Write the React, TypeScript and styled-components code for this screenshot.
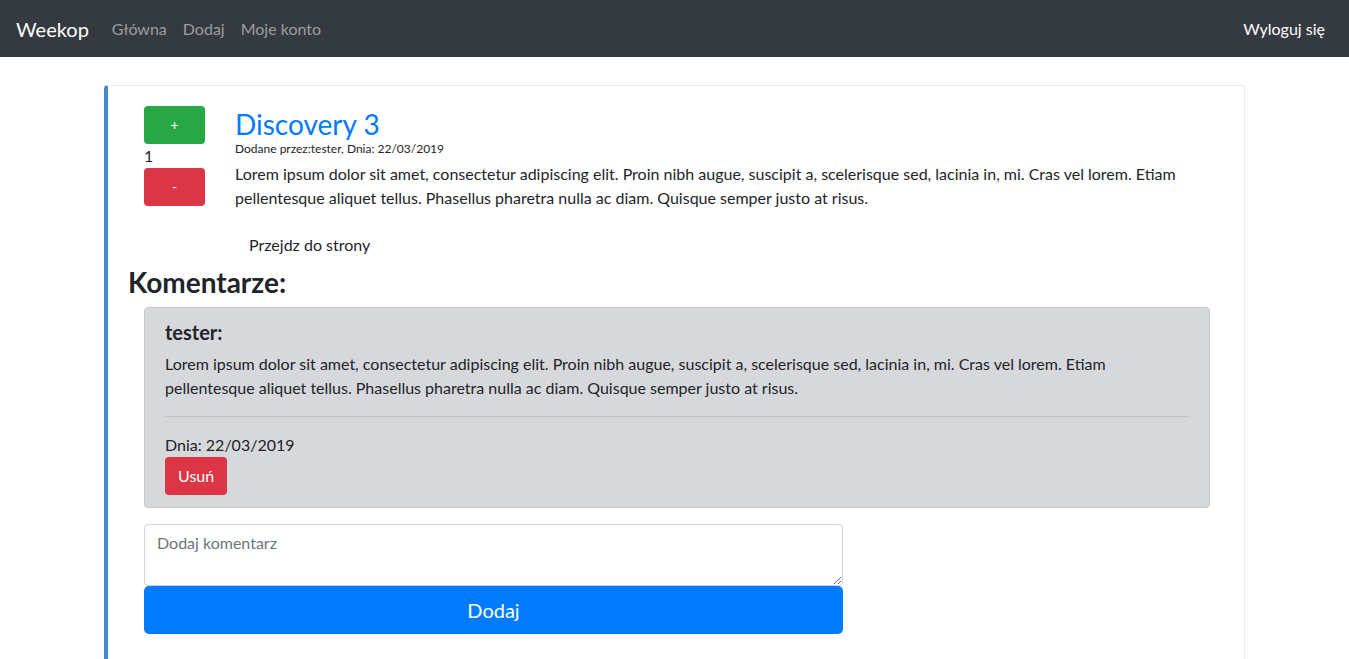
import styled, { createGlobalStyle } from "styled-components";

const COLORS = {
  dark: "#343a40",
  blue: "#007bff",
  green: "#28a745",
  red: "#dc3545",
  text: "#212529",
  muted: "#6c757d",
  accent: "#428bca",
};

const GlobalStyle = createGlobalStyle`
  * {
    box-sizing: border-box;
  }
  body {
    margin: 0;
    font-family: Lato, "Open Sans", "Noto Sans", sans-serif;
    font-size: 16px;
    line-height: 1.5;
    color: ${COLORS.text};
    background: #fff;
  }
`;

// Pasek nawigacji
const Navbar = styled.nav`
  display: flex;
  align-items: center;
  height: 57px;
  padding: 8px 16px;
  background: ${COLORS.dark};
`;

const Brand = styled.a`
  font-size: 20px;
  line-height: 30px;
  color: #fff;
  margin-right: 15px;
  text-decoration: none;
`;

const NavList = styled.div`
  display: flex;
  flex: 1;
`;

const NavLink = styled.a<{ $active?: boolean }>`
  padding: 8px;
  color: ${(p) => (p.$active ? "#fff" : "rgba(255, 255, 255, 0.5)")};
  text-decoration: none;
`;

// Karta posta
const Container = styled.main`
  width: 1141px;
  margin: 28px auto 0;
`;

const Card = styled.section`
  border: 1px solid #ececec;
  border-left: 4px solid ${COLORS.accent};
  border-radius: 4px;
  padding: 20px 20px 24px;
  min-height: 620px;
`;

const PostRow = styled.div`
  display: flex;
  gap: 30px;
  padding-left: 16px;
  padding-right: 14px;
`;

const VoteColumn = styled.div`
  display: flex;
  flex-direction: column;
  width: 61px;
  flex-shrink: 0;
`;

const Button = styled.button<{ $variant: "green" | "red" | "blue" | "plain" }>`
  font-family: inherit;
  font-size: 16px;
  line-height: 24px;
  padding: 6px 12px;
  border: 1px solid transparent;
  border-radius: 4px;
  cursor: pointer;
  color: ${(p) => (p.$variant === "plain" ? COLORS.text : "#fff")};
  background: ${(p) =>
    p.$variant === "green"
      ? COLORS.green
      : p.$variant === "red"
      ? COLORS.red
      : p.$variant === "blue"
      ? COLORS.blue
      : "transparent"};
`;

const VoteButton = styled(Button)`
  width: 61px;
  height: 38px;
  font-size: 14px;
`;

const Score = styled.div`
  line-height: 24px;
`;

const PostBody = styled.div`
  flex: 1;
`;

const Title = styled.a`
  display: block;
  font-size: 28px;
  line-height: 36px;
  color: ${COLORS.blue};
  text-decoration: none;
`;

const Meta = styled.div`
  font-size: 12px;
  line-height: 14px;
  margin-bottom: 6px;
`;

const Text = styled.p`
  margin: 0 0 16px;
`;

const LinkButton = styled(Button)`
  margin-left: 1px;
`;

const SectionTitle = styled.h2`
  margin: 1px 0 8px;
  font-size: 28px;
  line-height: 34px;
  font-weight: 700;
`;

const Comments = styled.div`
  padding: 0 14px 0 16px;
`;

const CommentBox = styled.div`
  background: #d6d8db;
  border: 1px solid #c6c8ca;
  border-radius: 4px;
  padding: 12px 20px;
`;

const Author = styled.h5`
  margin: 0 0 8px;
  font-size: 20px;
  line-height: 24px;
  font-weight: 700;
`;

const Divider = styled.hr`
  margin: 16px 0;
  border: 0;
  border-top: 1px solid rgba(0, 0, 0, 0.1);
`;

const CommentForm = styled.form`
  display: flex;
  flex-direction: column;
  width: 699px;
  margin-top: 16px;
`;

const TextArea = styled.textarea`
  height: 62px;
  padding: 6px 12px;
  font-family: inherit;
  font-size: 16px;
  line-height: 24px;
  color: ${COLORS.text};
  border: 1px solid #ced4da;
  border-radius: 4px;
  &::placeholder {
    color: ${COLORS.muted};
  }
`;

const SubmitButton = styled(Button)`
  font-size: 20px;
  line-height: 30px;
  padding: 8px 16px;
  border-radius: 5px;
`;

const App = () => {
  return (
    <>
      <GlobalStyle />
      <Navbar>
        <Brand href="#">Weekop</Brand>
        <NavList>
          <NavLink href="#">Główna</NavLink>
          <NavLink href="#">Dodaj</NavLink>
          <NavLink href="#">Moje konto</NavLink>
        </NavList>
        <NavLink href="#" $active>
          Wyloguj się
        </NavLink>
      </Navbar>
      <Container>
        <Card>
          <PostRow>
            <VoteColumn>
              <VoteButton $variant="green">+</VoteButton>
              <Score>1</Score>
              <VoteButton $variant="red">-</VoteButton>
            </VoteColumn>
            <PostBody>
              <Title href="#">Discovery 3</Title>
              <Meta>Dodane przez:tester, Dnia: 22/03/2019</Meta>
              <Text>
                Lorem ipsum dolor sit amet, consectetur adipiscing elit. Proin
                nibh augue, suscipit a, scelerisque sed, lacinia in, mi. Cras vel
                lorem. Etiam pellentesque aliquet tellus. Phasellus pharetra
                nulla ac diam. Quisque semper justo at risus.
              </Text>
              <LinkButton $variant="plain">Przejdz do strony</LinkButton>
            </PostBody>
          </PostRow>
          <SectionTitle>Komentarze:</SectionTitle>
          <Comments>
            <CommentBox>
              <Author>tester:</Author>
              <Text>
                Lorem ipsum dolor sit amet, consectetur adipiscing elit. Proin
                nibh augue, suscipit a, scelerisque sed, lacinia in, mi. Cras vel
                lorem. Etiam pellentesque aliquet tellus. Phasellus pharetra
                nulla ac diam. Quisque semper justo at risus.
              </Text>
              <Divider />
              <div>Dnia: 22/03/2019</div>
              <Button $variant="red">Usuń</Button>
            </CommentBox>
            <CommentForm onSubmit={(e) => e.preventDefault()}>
              <TextArea placeholder="Dodaj komentarz" />
              <SubmitButton $variant="blue" type="submit">
                Dodaj
              </SubmitButton>
            </CommentForm>
          </Comments>
        </Card>
      </Container>
    </>
  );
};

export default App;
